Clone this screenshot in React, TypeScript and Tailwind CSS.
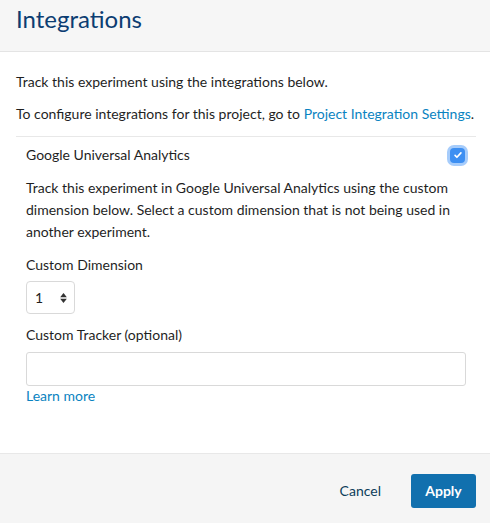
export default function App() {
  return (
    <div className="flex h-[523px] w-[490px] flex-col bg-white font-['Lato',_'Liberation_Sans',_sans-serif] text-[14px] text-[#1f1f1f]">
      <header className="h-[52px] shrink-0 border-b border-[#e4e4e4] bg-[#f6f6f6] px-4 pt-[5px]">
        <h1 className="text-[24px] leading-[28px] text-[#0c3d72]">Integrations</h1>
      </header>

      <div className="flex-1 pl-4 pr-[14px] pt-[19px]">
        <p className="leading-[22px]">Track this experiment using the integrations below.</p>
        <p className="mt-[10px] leading-[22px]">
          To configure integrations for this project, go to{' '}
          <span className="text-[#0a83c1]">Project Integration Settings</span>.
        </p>

        <div className="mt-[11px] border-t border-[#e8e8e8] px-[10px] pt-[7px]">
          <div className="flex items-center justify-between">
            <span className="leading-[22px]">Google Universal Analytics</span>
            <span className="mr-[1px] flex h-[15px] w-[15px] items-center justify-center rounded-[4px] bg-[#3d8ff2] ring-[3px] ring-[#a6ccfb]">
              <svg viewBox="0 0 12 12" className="h-[10px] w-[10px]" fill="none" stroke="white" strokeWidth="2" strokeLinecap="round" strokeLinejoin="round">
                <path d="M2.5 6.5l2.2 2.2L9.5 3.5" />
              </svg>
            </span>
          </div>

          <p className="mt-[11px] leading-[22px]">
            Track this experiment in Google Universal Analytics using the custom dimension below. Select a custom dimension that is not being used in another experiment.
          </p>

          <p className="mt-[11px] leading-[22px]">Custom Dimension</p>
          <div className="mt-[5px] flex h-[33px] w-[49px] items-center justify-between rounded-[4px] border border-[#d9d9d9] pl-[8px] pr-[7px]">
            <span>1</span>
            <svg viewBox="0 0 8 12" className="h-[10px] w-[7px]" fill="#333">
              <path d="M4 0L8 5H0z" />
              <path d="M4 12L0 7h8z" />
            </svg>
          </div>

          <p className="mt-[10px] leading-[22px]">Custom Tracker (optional)</p>
          <div className="mt-[6px] h-[34px] w-full rounded-[3px] border border-[#d9d9d9]" />
          <p className="leading-[20px] text-[#0a83c1]">Learn more</p>
        </div>
      </div>

      <footer className="flex h-[70px] shrink-0 items-center justify-end gap-[30px] border-t border-[#e8e8e8] bg-[#f5f5f5] px-[14px] pt-[4px]">
        <span className="text-[#0c3d5a]">Cancel</span>
        <button className="h-[34px] w-[65px] rounded-[3px] bg-[#1170ae] font-bold text-white">Apply</button>
      </footer>
    </div>
  )
}
